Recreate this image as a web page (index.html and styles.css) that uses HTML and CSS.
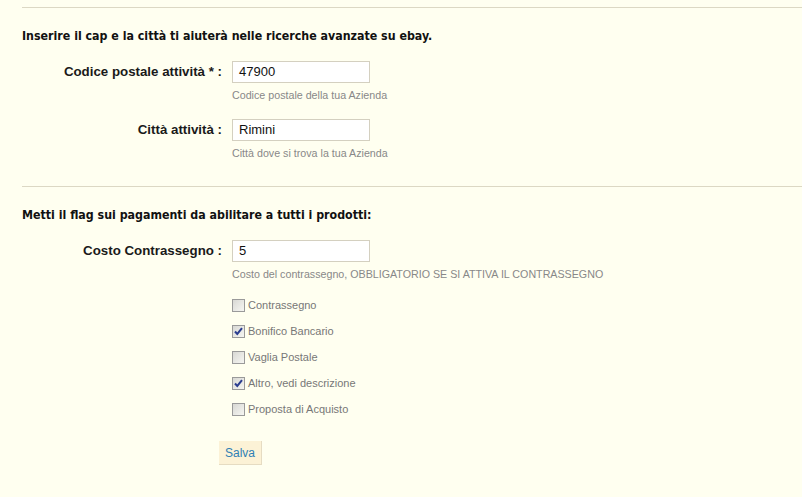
FILE: index.html
```html
<!DOCTYPE html>
<html lang="it">
<head>
<meta charset="utf-8">
<title>Impostazioni eBay</title>
<link rel="stylesheet" href="styles.css">
</head>
<body>
<div class="page">
  <section class="section first">
    <h2 class="heading">Inserire il cap e la città ti aiuterà nelle ricerche avanzate su ebay.</h2>
    <div class="row">
      <label class="label">Codice postale attività * :</label>
      <div class="field">
        <div class="input">47900</div>
        <div class="hint">Codice postale della tua Azienda</div>
      </div>
    </div>
    <div class="row">
      <label class="label">Città attività :</label>
      <div class="field">
        <div class="input">Rimini</div>
        <div class="hint">Città dove si trova la tua Azienda</div>
      </div>
    </div>
  </section>
  <section class="section second">
    <h2 class="heading">Metti il flag sui pagamenti da abilitare a tutti i prodotti:</h2>
    <div class="row">
      <label class="label">Costo Contrassegno :</label>
      <div class="field">
        <div class="input">5</div>
        <div class="hint">Costo del contrassegno, OBBLIGATORIO SE SI ATTIVA IL CONTRASSEGNO</div>
        <ul class="checks">
          <li class="check"><span class="box"></span>Contrassegno</li>
          <li class="check"><span class="box"><svg viewBox="0 0 11 11" width="11" height="11"><path d="M2 5.5 L4.3 8 L9 2.2" fill="none" stroke="#2b3d8f" stroke-width="2"/></svg></span>Bonifico Bancario</li>
          <li class="check"><span class="box"></span>Vaglia Postale</li>
          <li class="check"><span class="box"><svg viewBox="0 0 11 11" width="11" height="11"><path d="M2 5.5 L4.3 8 L9 2.2" fill="none" stroke="#2b3d8f" stroke-width="2"/></svg></span>Altro, vedi descrizione</li>
          <li class="check"><span class="box"></span>Proposta di Acquisto</li>
        </ul>
      </div>
    </div>
    <div class="actions">
      <button class="save" type="button">Salva</button>
    </div>
  </section>
</div>
</body>
</html>
```
FILE: styles.css
```css
html, body {
  margin: 0;
  padding: 0;
  background: #fffff0;
}
body {
  font-family: "Liberation Sans", Arial, sans-serif;
  color: #000;
}
.page {
  padding-top: 7px;
}
.section {
  border-top: 1px solid #dcd8c4;
  margin-left: 22px;
  padding-top: 20px;
}
.first {
  padding-bottom: 9px;
}
.second {
  padding-bottom: 30px;
}
.heading {
  margin: 0 0 17px 0;
  font-family: "DejaVu Sans Condensed", "DejaVu Sans", sans-serif;
  font-size: 12.3px;
  font-weight: bold;
  line-height: 16px;
  color: #111;
}
.row {
  display: flex;
  gap: 10px;
  margin-bottom: 17px;
}
.label {
  width: 200px;
  flex: none;
  text-align: right;
  font-size: 13.3px;
  font-weight: bold;
  line-height: 22px;
  color: #1a1a1a;
}
.field {
  display: flex;
  flex-direction: column;
}
.input {
  box-sizing: border-box;
  width: 138px;
  height: 22px;
  border: 1px solid #d4d0c0;
  background: #fff;
  padding: 0 6px;
  font-size: 13px;
  line-height: 20px;
  color: #111;
}
.hint {
  margin-top: 5px;
  font-size: 10.7px;
  line-height: 14px;
  color: #888;
}
.checks {
  list-style: none;
  margin: 17px 0 0 0;
  padding: 0;
  display: flex;
  flex-direction: column;
  gap: 12px;
}
.check {
  display: flex;
  align-items: center;
  gap: 3px;
  font-size: 11px;
  line-height: 14px;
  color: #777;
}
.box {
  box-sizing: border-box;
  width: 13px;
  height: 13px;
  border: 1px solid #9a9a9a;
  background: linear-gradient(135deg, #d8d8d4, #f6f6f2);
  display: flex;
  align-items: center;
  justify-content: center;
}
.actions {
  padding-left: 197px;
  padding-top: 8px;
}
.save {
  font-family: "Liberation Sans", Arial, sans-serif;
  font-size: 12px;
  color: #2e7fb4;
  background: #fcf2d6;
  border: none;
  border-right: 1px solid #e6dcc2;
  border-bottom: 1px solid #e6dcc2;
  width: 43px;
  height: 24px;
  padding: 0;
}
```
